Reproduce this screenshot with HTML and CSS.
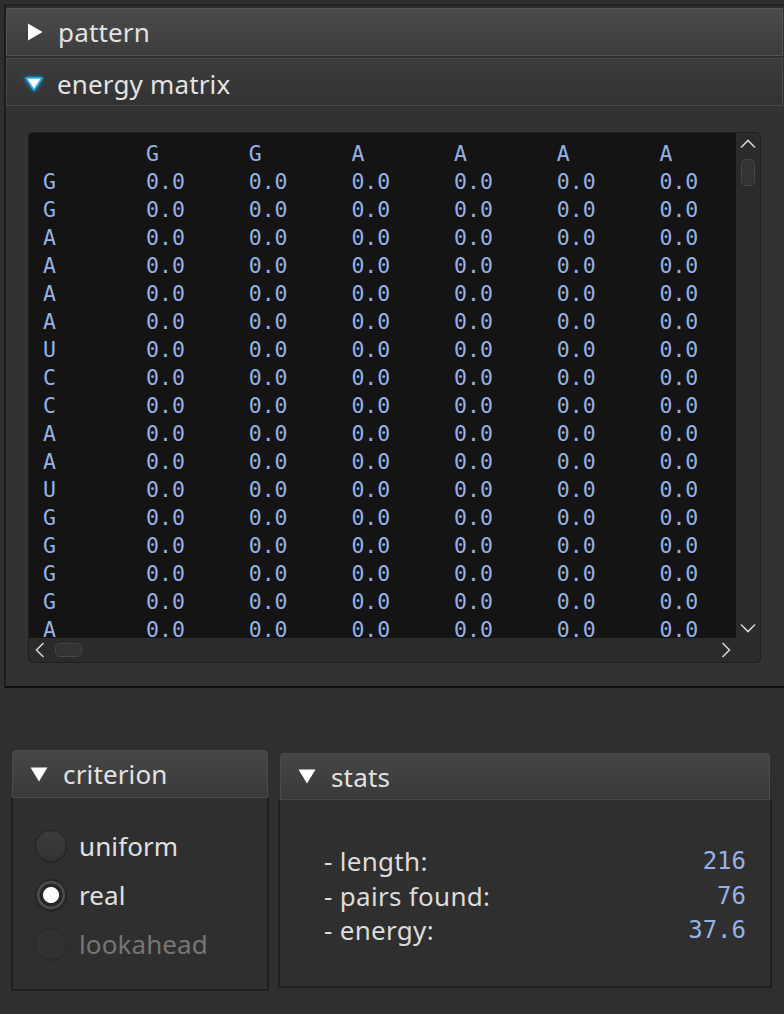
FILE: index.html
```html
<!DOCTYPE html>
<html>
<head>
<meta charset="utf-8">
<link rel="stylesheet" href="styles.css">
</head>
<body>
<div class="dock">
  <div class="sec-hdr sec-closed">
    <svg class="tri-right" width="16" height="18" viewBox="0 0 16 18"><polygon points="1,0.5 15.5,9 1,17.5" fill="#ffffff"/></svg>
    <span>pattern</span>
  </div>
  <div class="sec-hdr sec-open">
    <svg class="tri-glow" width="22" height="18" viewBox="0 0 22 18"><polygon points="3,3 19,3 11,15" fill="#ffffff" stroke="#2ab2f2" stroke-width="1.6" stroke-linejoin="round"/></svg>
    <span>energy matrix</span>
  </div>
  <div class="sec-body">
    <div class="textbox">
      <div class="viewport">
        <div class="mrow mhead"><span></span><span>G</span><span>G</span><span>A</span><span>A</span><span>A</span><span>A</span></div>
        <div class="mrow"><span>G</span><span>0.0</span><span>0.0</span><span>0.0</span><span>0.0</span><span>0.0</span><span>0.0</span></div>
        <div class="mrow"><span>G</span><span>0.0</span><span>0.0</span><span>0.0</span><span>0.0</span><span>0.0</span><span>0.0</span></div>
        <div class="mrow"><span>A</span><span>0.0</span><span>0.0</span><span>0.0</span><span>0.0</span><span>0.0</span><span>0.0</span></div>
        <div class="mrow"><span>A</span><span>0.0</span><span>0.0</span><span>0.0</span><span>0.0</span><span>0.0</span><span>0.0</span></div>
        <div class="mrow"><span>A</span><span>0.0</span><span>0.0</span><span>0.0</span><span>0.0</span><span>0.0</span><span>0.0</span></div>
        <div class="mrow"><span>A</span><span>0.0</span><span>0.0</span><span>0.0</span><span>0.0</span><span>0.0</span><span>0.0</span></div>
        <div class="mrow"><span>U</span><span>0.0</span><span>0.0</span><span>0.0</span><span>0.0</span><span>0.0</span><span>0.0</span></div>
        <div class="mrow"><span>C</span><span>0.0</span><span>0.0</span><span>0.0</span><span>0.0</span><span>0.0</span><span>0.0</span></div>
        <div class="mrow"><span>C</span><span>0.0</span><span>0.0</span><span>0.0</span><span>0.0</span><span>0.0</span><span>0.0</span></div>
        <div class="mrow"><span>A</span><span>0.0</span><span>0.0</span><span>0.0</span><span>0.0</span><span>0.0</span><span>0.0</span></div>
        <div class="mrow"><span>A</span><span>0.0</span><span>0.0</span><span>0.0</span><span>0.0</span><span>0.0</span><span>0.0</span></div>
        <div class="mrow"><span>U</span><span>0.0</span><span>0.0</span><span>0.0</span><span>0.0</span><span>0.0</span><span>0.0</span></div>
        <div class="mrow"><span>G</span><span>0.0</span><span>0.0</span><span>0.0</span><span>0.0</span><span>0.0</span><span>0.0</span></div>
        <div class="mrow"><span>G</span><span>0.0</span><span>0.0</span><span>0.0</span><span>0.0</span><span>0.0</span><span>0.0</span></div>
        <div class="mrow"><span>G</span><span>0.0</span><span>0.0</span><span>0.0</span><span>0.0</span><span>0.0</span><span>0.0</span></div>
        <div class="mrow"><span>G</span><span>0.0</span><span>0.0</span><span>0.0</span><span>0.0</span><span>0.0</span><span>0.0</span></div>
        <div class="mrow"><span>A</span><span>0.0</span><span>0.0</span><span>0.0</span><span>0.0</span><span>0.0</span><span>0.0</span></div>
      </div>
      <div class="vbar">
        <div class="arrow-v arrow-up"><svg width="16" height="10" viewBox="0 0 16 10"><polyline points="1,8.5 8,1.5 15,8.5" fill="none" stroke="#d2d2d2" stroke-width="1.6"/></svg></div>
        <div class="vhandle"></div>
        <div class="bar-space"></div>
        <div class="arrow-v arrow-down"><svg width="16" height="10" viewBox="0 0 16 10"><polyline points="1,1.5 8,8.5 15,1.5" fill="none" stroke="#d2d2d2" stroke-width="1.6"/></svg></div>
      </div>
      <div class="hbar">
        <div class="arrow-h arrow-left"><svg width="10" height="16" viewBox="0 0 10 16"><polyline points="8.5,1 1.5,8 8.5,15" fill="none" stroke="#d2d2d2" stroke-width="1.6"/></svg></div>
        <div class="hhandle"></div>
        <div class="bar-space"></div>
        <div class="arrow-h arrow-right"><svg width="10" height="16" viewBox="0 0 10 16"><polyline points="1.5,1 8.5,8 1.5,15" fill="none" stroke="#d2d2d2" stroke-width="1.6"/></svg></div>
      </div>
      <div class="corner"></div>
    </div>
  </div>
</div>

<div class="lower">
  <div class="group crit">
    <div class="grp-hdr">
      <svg class="tri-down" width="18" height="15" viewBox="0 0 18 15"><polygon points="0.5,0.5 17.5,0.5 9,14.5" fill="#ffffff"/></svg>
      <span>criterion</span>
    </div>
    <div class="grp-body radios">
      <div class="opt"><span class="radio"></span><span class="opt-label">uniform</span></div>
      <div class="opt"><span class="radio on"></span><span class="opt-label">real</span></div>
      <div class="opt dis"><span class="radio"></span><span class="opt-label">lookahead</span></div>
    </div>
  </div>
  <div class="group stats">
    <div class="grp-hdr">
      <svg class="tri-down" width="18" height="15" viewBox="0 0 18 15"><polygon points="0.5,0.5 17.5,0.5 9,14.5" fill="#ffffff"/></svg>
      <span>stats</span>
    </div>
    <div class="grp-body stat-list">
      <div class="stat"><span>- length:</span><span class="num">216</span></div>
      <div class="stat"><span>- pairs found:</span><span class="num">76</span></div>
      <div class="stat"><span>- energy:</span><span class="num">37.6</span></div>
    </div>
  </div>
</div>
</body>
</html>
```

FILE: styles.css
```css
html, body {
  margin: 0;
  padding: 0;
}
body {
  width: 784px;
  height: 1014px;
  overflow: hidden;
  background: #2f2f2f;
  font-family: "Noto Sans", "Open Sans", sans-serif;
  color: #dcdcdc;
}

.dock {
  margin: 4px 0 0 4px;
  border-top: 2px solid #232323;
  border-left: 2px solid #1c1c1c;
  border-bottom: 2px solid #0e0e0e;
  padding-top: 2px;
  padding-right: 1px;
}

.sec-hdr {
  height: 48px;
  box-sizing: border-box;
  display: flex;
  align-items: center;
  padding-left: 20px;
  border: 1px solid #555555;
  font-size: 26px;
  letter-spacing: 0.15px;
  color: #e2e2e2;
}
.sec-closed {
  background: linear-gradient(#4a4a4a, #3d3d3d);
  margin-bottom: 2px;
}
.sec-open {
  background: linear-gradient(#3c3c3c, #323232);
  border-color: #4a4a4a;
  padding-top: 4px;
}
.tri-right {
  margin-right: 15px;
}
.tri-glow {
  margin-left: -4px;
  margin-right: 12px;
  filter: drop-shadow(0 0 2px #1aa6ee);
}

.sec-body {
  background: #323232;
  padding: 26px 22px 23px 22px;
}

.textbox {
  height: 531px;
  box-sizing: border-box;
  border: 1px solid #1e1e1e;
  border-radius: 5px;
  background: #141414;
  display: grid;
  grid-template-columns: 1fr 24px;
  grid-template-rows: 1fr 24px;
  overflow: hidden;
}

.viewport {
  overflow: hidden;
  padding: 6px 0 0 14px;
  font-family: "DejaVu Sans Mono", monospace;
  font-size: 21.5px;
  line-height: 28px;
  color: #94b2e6;
  min-width: 0;
}
.mrow {
  display: grid;
  grid-template-columns: 103px repeat(6, 102.7px);
  white-space: nowrap;
}
.mhead {
  line-height: 29px;
}

.vbar {
  background: #2b2b2b;
  display: flex;
  flex-direction: column;
  align-items: center;
}
.hbar {
  background: #2b2b2b;
  display: flex;
  align-items: center;
}
.corner {
  background: #2b2b2b;
}
.bar-space {
  flex: 1;
}
.arrow-v {
  width: 24px;
  display: flex;
  justify-content: center;
  align-items: center;
}
.arrow-up {
  height: 22px;
}
.arrow-down {
  height: 20px;
}
.vhandle {
  margin-top: 4px;
  width: 14px;
  height: 27px;
  box-sizing: border-box;
  border: 1px solid #474747;
  border-radius: 5px;
  background: #333333;
}
.arrow-h {
  height: 24px;
  display: flex;
  justify-content: center;
  align-items: center;
}
.arrow-left {
  width: 22px;
}
.arrow-right {
  width: 20px;
}
.hhandle {
  margin-left: 4px;
  width: 27px;
  height: 14px;
  box-sizing: border-box;
  border: 1px solid #474747;
  border-radius: 5px;
  background: #333333;
}

.lower {
  display: flex;
  align-items: flex-start;
  gap: 9px;
  padding-left: 11px;
  margin-top: 62px;
}
.grp-hdr {
  height: 48px;
  box-sizing: border-box;
  display: flex;
  align-items: center;
  padding-left: 17px;
  border: 1px solid #4b4b4b;
  border-radius: 4px 4px 0 0;
  background: linear-gradient(#464646, #3a3a3a);
  font-size: 26px;
  letter-spacing: 0.15px;
  color: #e2e2e2;
}
.tri-down {
  margin-right: 15px;
}
.grp-body {
  box-sizing: border-box;
  border: 2px solid #1f1f1f;
  border-top: 0;
}

.crit {
  width: 258px;
}
.crit .grp-hdr {
  margin: 0 1px;
}
.crit .grp-body {
  height: 193px;
}
.radios {
  padding: 23px 0 0 22px;
}
.opt {
  height: 49px;
  display: flex;
  align-items: center;
  gap: 12px;
  font-size: 26px;
  letter-spacing: 0.1px;
  color: #e0e0e0;
}
.radio {
  width: 32px;
  height: 32px;
  flex: none;
  box-sizing: border-box;
  border-radius: 50%;
  border: 1px solid #232323;
  background: linear-gradient(#3b3b3b, #333333);
  box-shadow: 0 1px 1px #262626;
}
.radio.on {
  background: radial-gradient(circle, #ffffff 0 7.5px, #262626 8.5px 11px, #4c4c4c 12px 13.5px, #2c2c2c 14.5px);
}
.opt.dis {
  color: #767676;
}
.opt.dis .radio {
  background: #313131;
  border-color: #2b2b2b;
  box-shadow: 0 1px 1px #2a2a2a;
}

.stats {
  width: 494px;
  margin-top: 3px;
}
.stats .grp-hdr {
  margin: 0 2px;
  height: 47px;
}
.stats .grp-body {
  height: 188px;
}
.stat-list {
  padding: 44px 24px 0 44px;
}
.stat {
  display: flex;
  justify-content: space-between;
  align-items: center;
  height: 34.5px;
  font-size: 26px;
  letter-spacing: 0.3px;
  color: #dcdcdc;
}
.num {
  font-family: "DejaVu Sans Mono", monospace;
  font-size: 24px;
  letter-spacing: 0;
  color: #94b2e6;
}
```
